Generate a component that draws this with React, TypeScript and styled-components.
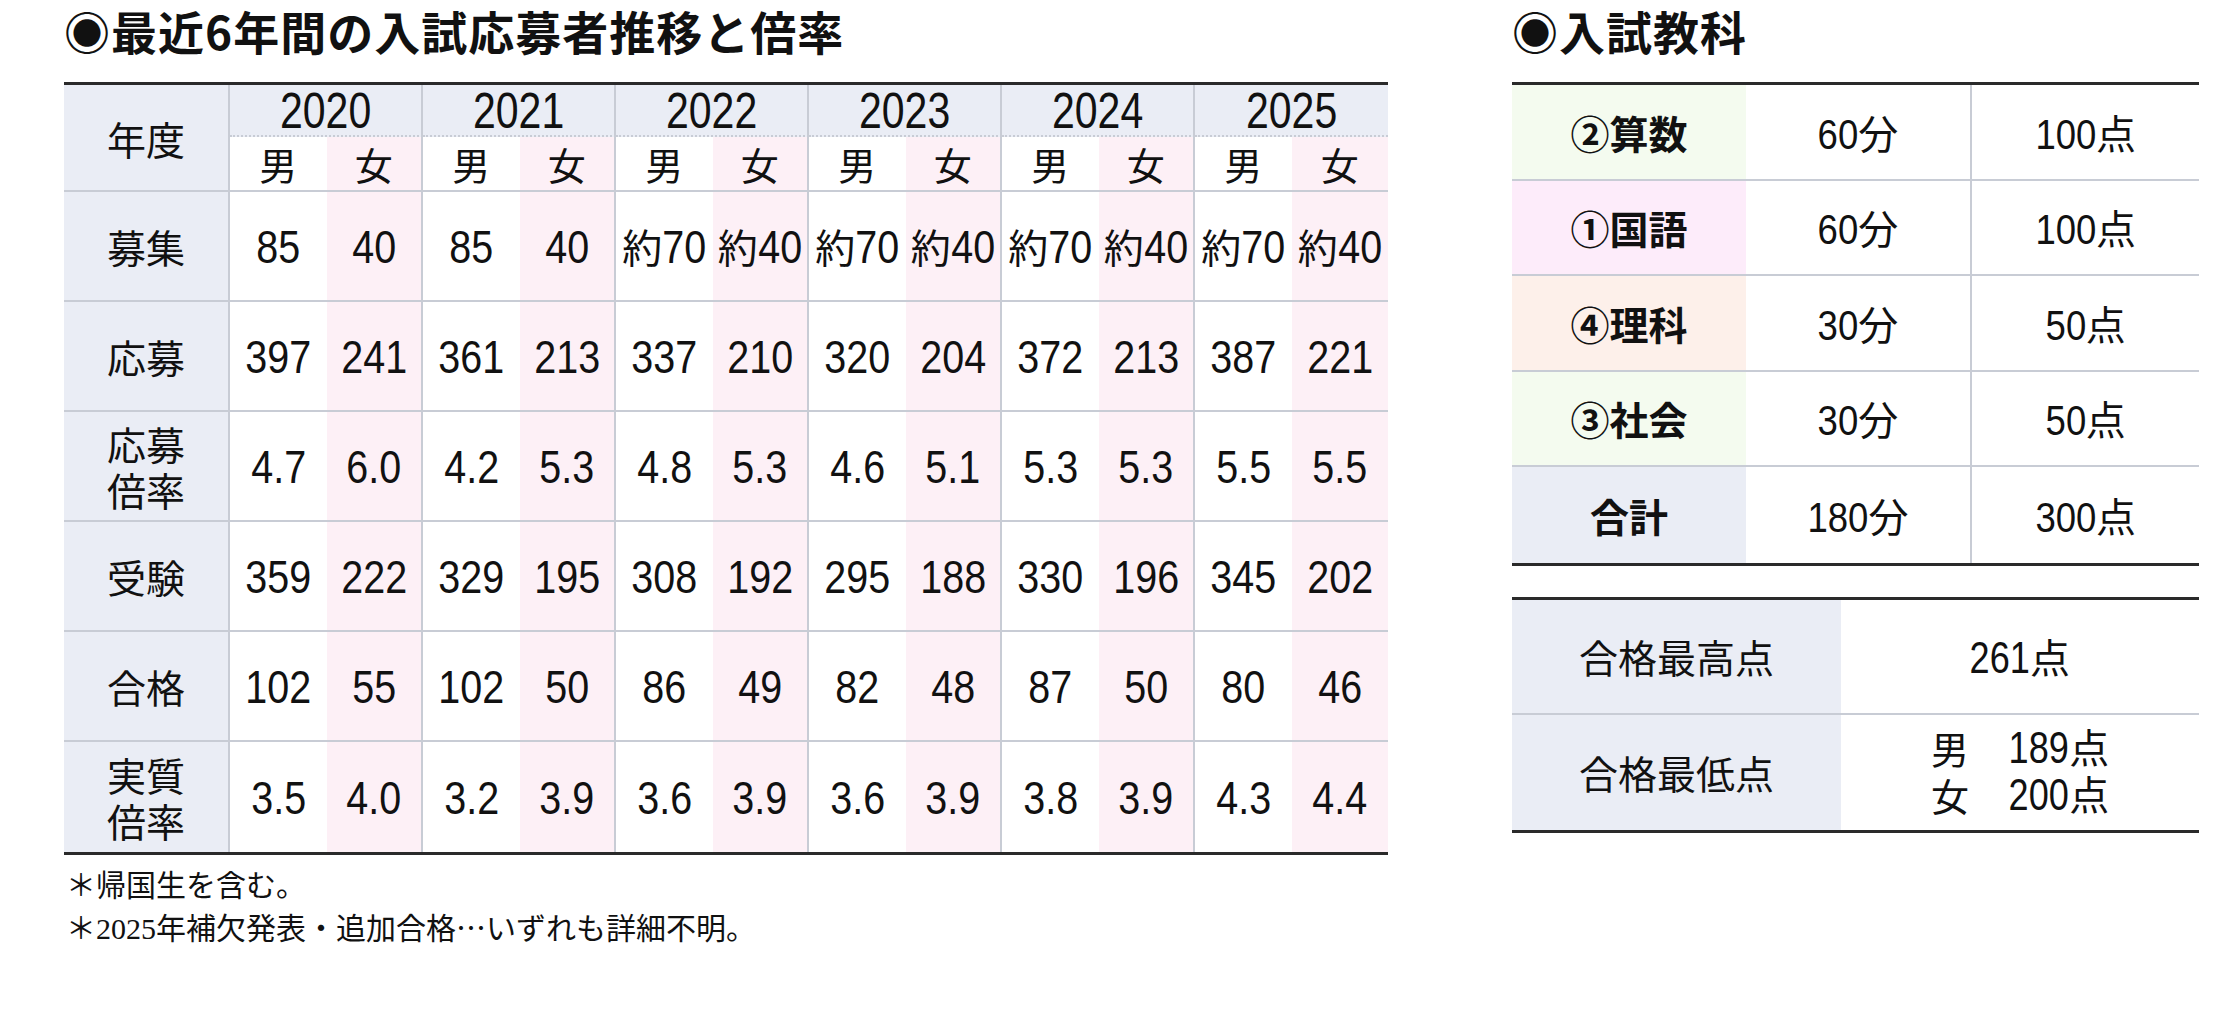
import styled, { createGlobalStyle } from 'styled-components';

const LINE = '#c8ccd5';
const DARK = '#2a2a2a';
const BLUE = '#eaedf5';
const PINK = '#fdf0f6';

const GlobalStyle = createGlobalStyle`
  html, body {
    margin: 0;
    padding: 0;
    background: #fff;
  }
  body {
    font-family: "Liberation Sans", "Noto Sans CJK JP", sans-serif;
    color: #111;
  }
`;

const Page = styled.div`
  display: flex;
  align-items: flex-start;
  gap: 124px;
  padding-left: 64px;
  width: 2220px;
  height: 1030px;
  box-sizing: border-box;
`;

const Section = styled.section<{ $width: number }>`
  flex: none;
  width: ${p => p.$width}px;
`;

const Title = styled.h2`
  margin: 0 0 18px;
  height: 64px;
  line-height: 60px;
  font-family: "Noto Sans CJK JP", sans-serif;
  font-size: 46px;
  font-weight: 700;
  letter-spacing: 1px;
  white-space: nowrap;
`;

// printed table uses condensed figures: squeeze Arial-width digits and
// pull the margins in so the layout width follows the squeezed glyphs
const Num = styled.span<{ $size: number; $squeeze: number; $em: number }>`
  display: inline-block;
  font-family: "Liberation Sans", sans-serif;
  font-size: ${p => p.$size}px;
  transform: scaleX(${p => p.$squeeze});
  margin: 0 ${p => (-p.$em * p.$size * (1 - p.$squeeze)) / 2}px;
`;

const emWidth = (s: string) => s.split('').reduce((w, ch) => w + (ch === '.' ? 0.278 : 0.556), 0);

function Value({ text, size, squeeze = 0.84 }: { text: string; size: number; squeeze?: number }) {
  const parts = text.split(/([0-9.]+)/).filter(Boolean);
  return (
    <span>
      {parts.map((p, i) =>
        /[0-9]/.test(p) ? (
          <Num key={i} $size={size} $squeeze={squeeze} $em={emWidth(p)}>
            {p}
          </Num>
        ) : (
          <span key={i}>{p}</span>
        ),
      )}
    </span>
  );
}

/* ---------- left: applicants table ---------- */

const ExamGrid = styled.div`
  display: grid;
  grid-template-columns: 166px repeat(12, 1fr);
  grid-template-rows: 52px 55px repeat(6, 110px);
  border-top: 3px solid ${DARK};
  border-bottom: 3px solid ${DARK};
`;

const Cell = styled.div<{ $bg?: string; $right?: boolean; $bottom?: 'solid' | 'dotted' | 'none' }>`
  display: flex;
  align-items: center;
  justify-content: center;
  text-align: center;
  box-sizing: border-box;
  background: ${p => p.$bg || '#fff'};
  border-right: ${p => (p.$right ? `2px solid ${LINE}` : 'none')};
  border-bottom: ${p =>
    p.$bottom === 'none' ? 'none' : p.$bottom === 'dotted' ? `2px dotted ${LINE}` : `2px solid ${LINE}`};
  font-size: 40px;
  white-space: nowrap;
`;

const CornerCell = styled(Cell)`
  grid-row: span 2;
  font-family: "Noto Sans CJK JP", sans-serif;
  font-size: 39px;
`;

const YearCell = styled(Cell)`
  grid-column: span 2;
  padding-top: 2px;
`;

const GenderCell = styled(Cell)`
  font-family: "Noto Sans CJK JP", sans-serif;
  font-size: 38px;
`;

const RowLabel = styled(Cell)`
  font-family: "Noto Sans CJK JP", sans-serif;
  font-size: 39px;
  line-height: 46px;
`;

const Notes = styled.div`
  margin-top: 7px;
  padding-left: 2px;
  font-family: "Noto Sans CJK JP", serif;
  font-size: 30px;
  line-height: 43px;
`;

const SerifNum = styled.span`
  font-family: "Liberation Serif", serif;
`;

/* ---------- right: subjects / scores ---------- */

const SubjectGrid = styled.div`
  display: grid;
  grid-template-columns: 234px 226px 227px;
  grid-template-rows: repeat(5, 95.5px);
  border-top: 3px solid ${DARK};
  border-bottom: 3px solid ${DARK};
`;

const SubjectLabel = styled(Cell)`
  font-family: "Noto Sans CJK JP", sans-serif;
  font-size: 39px;
  font-weight: 700;
`;

const ScoreGrid = styled.div`
  display: grid;
  grid-template-columns: 329px 358px;
  grid-template-rows: 115px 115px;
  margin-top: 31px;
  border-top: 3px solid ${DARK};
  border-bottom: 3px solid ${DARK};
`;

const ScoreLabel = styled(Cell)`
  font-family: "Noto Sans CJK JP", sans-serif;
  font-size: 39px;
`;

const SplitScore = styled.div`
  display: grid;
  grid-template-columns: auto auto;
  column-gap: 40px;
  line-height: 46px;
`;

const Gender = styled.span`
  font-family: "Noto Sans CJK JP", sans-serif;
  font-size: 38px;
`;

const YEARS = ['2020', '2021', '2022', '2023', '2024', '2025'];

const ROWS: { label: string[]; values: string[] }[] = [
  { label: ['募集'], values: ['85', '40', '85', '40', '約70', '約40', '約70', '約40', '約70', '約40', '約70', '約40'] },
  { label: ['応募'], values: ['397', '241', '361', '213', '337', '210', '320', '204', '372', '213', '387', '221'] },
  { label: ['応募', '倍率'], values: ['4.7', '6.0', '4.2', '5.3', '4.8', '5.3', '4.6', '5.1', '5.3', '5.3', '5.5', '5.5'] },
  { label: ['受験'], values: ['359', '222', '329', '195', '308', '192', '295', '188', '330', '196', '345', '202'] },
  { label: ['合格'], values: ['102', '55', '102', '50', '86', '49', '82', '48', '87', '50', '80', '46'] },
  { label: ['実質', '倍率'], values: ['3.5', '4.0', '3.2', '3.9', '3.6', '3.9', '3.6', '3.9', '3.8', '3.9', '4.3', '4.4'] },
];

const SUBJECTS = [
  { name: '②算数', time: '60分', score: '100点', bg: '#f4fbef' },
  { name: '①国語', time: '60分', score: '100点', bg: '#fdecfa' },
  { name: '④理科', time: '30分', score: '50点', bg: '#fdf0ea' },
  { name: '③社会', time: '30分', score: '50点', bg: '#f4fbef' },
  { name: '合計', time: '180分', score: '300点', bg: BLUE },
];

export default function App() {
  return (
    <>
      <GlobalStyle />
      <Page>
        <Section $width={1324}>
          <Title>◉最近6年間の入試応募者推移と倍率</Title>
          <ExamGrid>
            <CornerCell $bg={BLUE} $right>年度</CornerCell>
            {YEARS.map((y, i) => (
              <YearCell key={y} $bg={BLUE} $right={i < YEARS.length - 1} $bottom="dotted">
                <Value text={y} size={50} squeeze={0.82} />
              </YearCell>
            ))}
            {YEARS.map((y, i) => [
              <GenderCell key={y + 'm'}>男</GenderCell>,
              <GenderCell key={y + 'f'} $bg={PINK} $right={i < YEARS.length - 1}>
                女
              </GenderCell>,
            ])}
            {ROWS.map((row, r) => {
              const last = r === ROWS.length - 1 ? 'none' : 'solid';
              return [
                <RowLabel key={'l' + r} $bg={BLUE} $right $bottom={last}>
                  <div>
                    {row.label.map(t => (
                      <div key={t}>{t}</div>
                    ))}
                  </div>
                </RowLabel>,
                ...row.values.map((v, c) => (
                  <Cell
                    key={r + '-' + c}
                    $bg={c % 2 ? PINK : '#fff'}
                    $right={c % 2 === 1 && c < 11}
                    $bottom={last}
                  >
                    <Value text={v} size={47} />
                  </Cell>
                )),
              ];
            })}
          </ExamGrid>
          <Notes>
            <div>＊帰国生を含む。</div>
            <div>
              ＊<SerifNum>2025</SerifNum>年補欠発表・追加合格…いずれも詳細不明。
            </div>
          </Notes>
        </Section>

        <Section $width={687}>
          <Title>◉入試教科</Title>
          <SubjectGrid>
            {SUBJECTS.map((s, i) => {
              const last = i === SUBJECTS.length - 1 ? 'none' : 'solid';
              return [
                <SubjectLabel key={s.name} $bg={s.bg} $bottom={last}>
                  {s.name}
                </SubjectLabel>,
                <Cell key={s.name + 't'} $right $bottom={last}>
                  <Value text={s.time} size={43} squeeze={0.85} />
                </Cell>,
                <Cell key={s.name + 's'} $bottom={last}>
                  <Value text={s.score} size={43} squeeze={0.85} />
                </Cell>,
              ];
            })}
          </SubjectGrid>
          <ScoreGrid>
            <ScoreLabel $bg={BLUE}>合格最高点</ScoreLabel>
            <Cell>
              <Value text="261点" size={44} squeeze={0.82} />
            </Cell>
            <ScoreLabel $bg={BLUE} $bottom="none">合格最低点</ScoreLabel>
            <Cell $bottom="none">
              <SplitScore>
                <Gender>男</Gender>
                <Value text="189点" size={44} squeeze={0.82} />
                <Gender>女</Gender>
                <Value text="200点" size={44} squeeze={0.82} />
              </SplitScore>
            </Cell>
          </ScoreGrid>
        </Section>
      </Page>
    </>
  );
}
